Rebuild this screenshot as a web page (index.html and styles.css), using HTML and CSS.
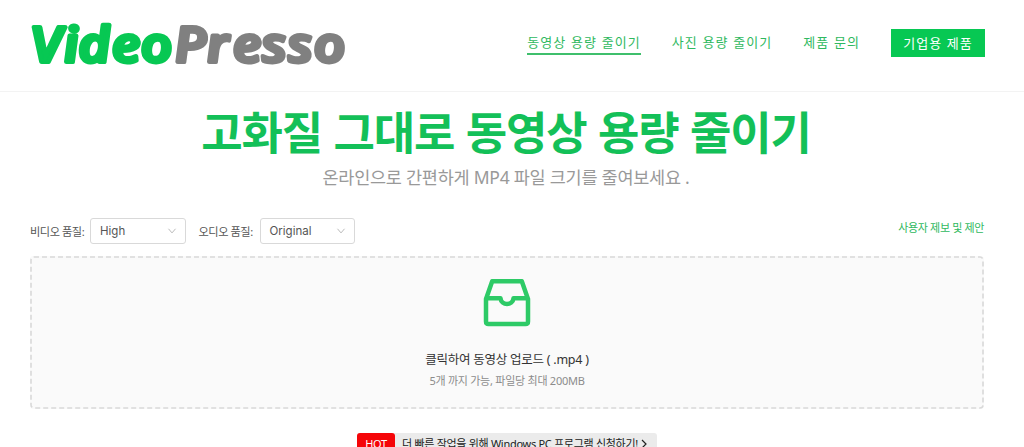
FILE: index.html
```html
<!DOCTYPE html>
<html lang="ko">
<head>
<meta charset="utf-8">
<title>VideoPresso</title>
<link rel="stylesheet" href="styles.css">
</head>
<body>
<header class="header">
  <a class="logo" aria-label="VideoPresso">
    <svg width="340" height="84" viewBox="0 0 340 84">
      <g transform="translate(0 58) skewX(6) scale(1.13 1)">
        <text class="logo-video" x="2.300 31 43.800 73.500 99.100" y="0">Video</text>
        <text class="logo-presso" x="129 157.500 180.500 206.200 229.200 252.200" y="0">Presso</text>
      </g>
    </svg>
  </a>
  <nav class="nav">
    <a class="nav-link active">동영상 용량 줄이기</a>
    <a class="nav-link">사진 용량 줄이기</a>
    <a class="nav-link">제품 문의</a>
    <a class="nav-button">기업용 제품</a>
  </nav>
</header>
<main class="main">
  <h1 class="title">고화질 그대로 동영상 용량 줄이기</h1>
  <p class="subtitle">온라인으로 간편하게 MP4 파일 크기를 줄여보세요 .</p>
  <div class="toolbar">
    <span class="label">비디오 품질:</span>
    <div class="select"><span>High</span><svg width="10" height="10" viewBox="0 0 10 10"><path d="M1.500 2.800 5 6.900 8.500 2.800"/></svg></div>
    <span class="label label-audio">오디오 품질:</span>
    <div class="select"><span>Original</span><svg width="10" height="10" viewBox="0 0 10 10"><path d="M1.500 2.800 5 6.900 8.500 2.800"/></svg></div>
    <a class="feedback">사용자 제보 및 제안</a>
  </div>
  <section class="dropzone">
    <svg class="outline" width="954" height="153"><rect x="1" y="1" width="952" height="151" rx="3"/></svg>
    <svg class="inbox" width="48" height="48" viewBox="0 0 48 48"><path d="M9.200 2.200H38.800L45 20V42.500Q45 45 42.500 45H5.500Q3 45 3 42.500V20ZM3 19.200H17.500C18.300 27 29.700 27 30.500 19.200H45"/></svg>
    <p class="upload-text">클릭하여 동영상 업로드 ( .mp4 )</p>
    <p class="upload-hint">5개 까지 가능, 파일당 최대 200MB</p>
  </section>
  <a class="promo"><span class="hot">HOT</span><span class="promo-text">더 빠른 작업을 위해 Windows PC 프로그램 신청하기!</span><svg class="arrow" width="6" height="10" viewBox="0 0 6 10"><path d="M1 1 5 5 1 9"/></svg></a>
</main>
</body>
</html>
```
FILE: styles.css
```css
* { box-sizing: border-box; }
html { overflow: hidden; }
body {
  margin: 0;
  height: 447px;
  overflow: hidden;
  background: #fff;
  font-family: "Noto Sans", "Noto Sans CJK KR", sans-serif;
}
h1, p { margin: 0; }
.header {
  display: flex;
  align-items: flex-start;
  justify-content: space-between;
  width: 1024px;
  height: 92px;
  padding: 0 39px 0 30px;
  border-bottom: 1px solid #f3f3f3;
}
.logo { margin-top: 4px; height: 84px; }
.logo svg { overflow: visible; }
.logo text {
  font: italic 600 49px "Open Sans", sans-serif;
  stroke-width: 4px;
  stroke-linejoin: round;
}
.logo .logo-video { fill: #07c853; stroke: #07c853; }
.logo .logo-presso { fill: #808080; stroke: #808080; }
.nav {
  display: flex;
  margin-top: 29px;
  font-family: "Noto Sans CJK KR", sans-serif;
  font-size: 13px;
  line-height: 25px;
  letter-spacing: 1.050px;
  color: #2fb960;
  white-space: nowrap;
}
.nav-link { height: 26px; margin-right: 31px; }
.nav-link.active { border-bottom: 2px solid #3fbf6c; }
.nav-button {
  height: 28px;
  width: 94px;
  text-align: center;
  line-height: 27px;
  color: #fff;
  background: #07c853;
}
.main { width: 1014px; padding: 0 30px; display: flex; flex-direction: column; align-items: center; }
.title {
  margin-top: 5px;
  height: 67px;
  font: 700 45px/67px "Noto Sans CJK KR", sans-serif;
  letter-spacing: -1.150px;
  color: #13c058;
  white-space: nowrap;
}
.subtitle {
  height: 26px;
  font-size: 17.500px;
  letter-spacing: -0.250px;
  line-height: 27px;
  color: #999;
  white-space: nowrap;
}
.title, .subtitle { position: relative; left: -1px; }
.toolbar {
  display: flex;
  align-items: center;
  width: 954px;
  height: 26px;
  margin-top: 28px;
  font-size: 11.500px;
  color: #555;
  white-space: nowrap;
}
.label { width: 60px; font-size: 11.200px; letter-spacing: -0.450px; }
.label-audio { margin-left: 13px; width: 61px; }
.select {
  display: flex;
  align-items: center;
  justify-content: space-between;
  width: 95.500px;
  height: 26px;
  padding: 0 8px 0 9px;
  border: 1px solid #d9d9d9;
  border-radius: 3px;
  font-family: Inter, sans-serif;
}
.select path { fill: none; stroke: #bbb; stroke-width: 1; }
.feedback { margin-left: auto; margin-top: -9px; font-size: 11px; letter-spacing: -0.350px; color: #2fb960; }
.dropzone {
  position: relative;
  display: flex;
  flex-direction: column;
  align-items: center;
  width: 954px;
  height: 153px;
  margin-top: 12px;
  padding-top: 23px;
  background: #fafafa;
  border-radius: 3px;
}
.outline { position: absolute; top: 0; left: 0; }
.outline rect { fill: none; stroke: #d9d9d9; stroke-width: 1.600; stroke-dasharray: 5 3; }
.inbox path { fill: none; stroke: #2dca66; stroke-width: 4.500; stroke-linejoin: round; }
.upload-text { margin-top: 23px; font-size: 12.500px; letter-spacing: -0.250px; line-height: 20px; color: #333; white-space: nowrap; }
.upload-hint { margin-top: 1px; font-size: 11px; letter-spacing: -0.250px; line-height: 20px; color: #8c8c8c; white-space: nowrap; }
.promo {
  display: flex;
  align-items: center;
  width: 300px;
  height: 22px;
  margin-top: 24px;
  background: #ebebeb;
  border-radius: 3px;
  font-size: 11px;
  letter-spacing: -0.290px;
  line-height: 22px;
  color: #222;
  white-space: nowrap;
}
.hot {
  flex: none;
  width: 38px;
  height: 22px;
  margin-right: 7px;
  border-radius: 3px;
  background: #f50508;
  color: #fff;
  text-align: center;
}
.promo-text { height: 22px; }
.arrow { margin-left: 3px; }
.arrow path { fill: none; stroke: #222; stroke-width: 1.200; }
```
